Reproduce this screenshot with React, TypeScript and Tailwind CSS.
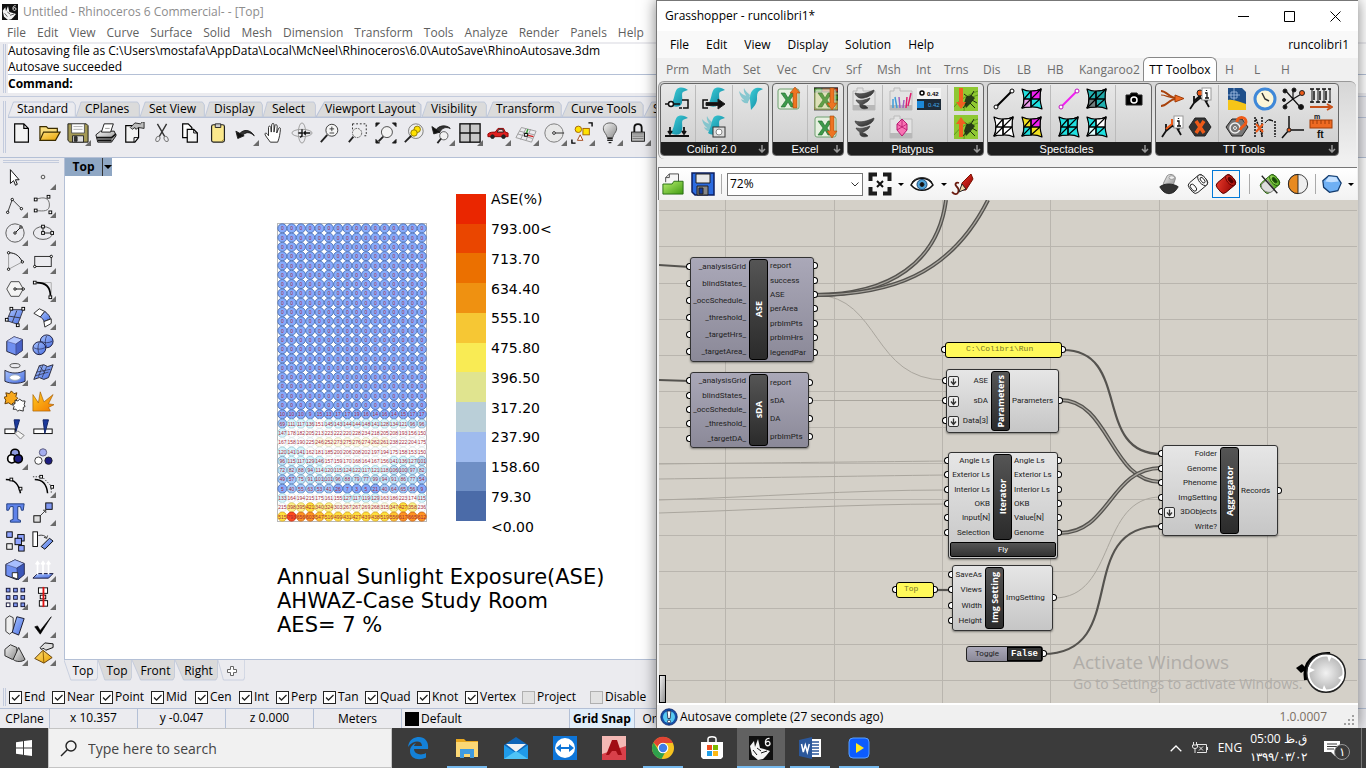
import { ReactNode } from "react";

const UI = "font-['Open_Sans','Noto_Sans',sans-serif]";

function Ico({ children, className = "w-6 h-6" }: { children?: ReactNode; className?: string }) {
  return (
    <svg viewBox="0 0 24 24" className={className + " shrink-0"} fill="none" stroke="#222" strokeWidth="1" aria-hidden="true">
      {children}
    </svg>
  );
}

// shared gradients for the toolbar drawings
function Defs() {
  const grads: [string, string, string][] = [
    ["gBlue", "#a9c4ff", "#4a6fe0"],
    ["gYel", "#ffe07a", "#e8a200"],
    ["gGray", "#f4f4f4", "#8c8c8c"],
    ["gRed", "#e8392a", "#8f0000"],
    ["gGreen", "#b8f070", "#3f9a10"],
    ["gTeal", "#3fd0d8", "#0b7f9c"],
    ["gDark", "#777777", "#222222"],
    ["gFire", "#ffcc20", "#f27800"],
  ];
  return (
    <svg width="0" height="0" className="absolute" aria-hidden="true">
      <defs>
        {grads.map(([id, a, b]) => (
          <linearGradient key={id} id={id} x1="0" y1="0" x2="1" y2="1">
            <stop offset="0" stopColor={a} />
            <stop offset="1" stopColor={b} />
          </linearGradient>
        ))}
        <radialGradient id="gKnob">
          <stop offset="0" stopColor="#f2f2f2" />
          <stop offset="1" stopColor="#b4b4b4" />
        </radialGradient>
      </defs>
    </svg>
  );
}

const RhinoMark = () => (
  <>
    <rect width="24" height="24" fill="#111" stroke="none" />
    <path d="M1 10l4-5 1 6 3-8 2 9 4 1 6 2-4 5-3 3-5 1-6-5z" fill="#f4f4f4" stroke="none" />
    <path d="M8 12l4 3M4 14l4 5M12 17l6-2" stroke="#111" />
    <path d="M20.500 2.500c-3-.5-4.500 2-4 5 .5 3.500 4.500 2.500 4.500 0s-3-3-4.200-.8" stroke="#f4f4f4" strokeWidth="1.300" />
  </>
);

const node = (x: number, y: number) => <rect x={x - 1.5} y={y - 1.5} width="3" height="3" fill="#fff" stroke="#000" />;
const dot = (x: number, y: number) => <circle cx={x} cy={y} r="1.300" fill="#fff" stroke="#000" />;

const stdIcons: [string, boolean, ReactNode][] = [
  ["New", false, <path d="M4 2h10l5 5v15H4zM14 2v5h5" fill="#f3f3f3" stroke="#000" strokeWidth="1.300" />],
  ["Open", false, <><path d="M1 19V5h7l2 2h10v4" fill="#f7dc7c" stroke="#3b2c00" strokeWidth="1.300" /><path d="M1 20l4-9h18l-5 9z" fill="url(#gYel)" stroke="#3b2c00" strokeWidth="1.300" /></>],
  ["Save", true, <><path d="M1 2h20l2 2v18H3l-2-2z" fill="#a59a55" stroke="#111" /><path d="M5 2h14v10H5z" fill="#fff" stroke="#555" /><path d="M7 5h10M7 8h10" stroke="#aaa" /><path d="M6 15h12v7H6z" fill="#ddd" /><path d="M8 16h3v5H8z" fill="#333" /></>],
  ["Print", false, <><path d="M1 14l5-4h15l2 5-5 7H3z" fill="url(#gGray)" stroke="#111" /><path d="M7 11l3-9h10l-3 9z" fill="#fff" stroke="#111" /><path d="M2 17h16l5-4M3 20h15" stroke="#111" strokeWidth="1.800" /><path d="M11 7h5" stroke="#999" /></>],
  ["Properties", false, <><path d="M3 4h14v13l-4 5H3z" fill="#f3f3f3" stroke="#000" strokeWidth="1.300" /><path d="M12 22v-5h5" stroke="#000" /><path d="M8 6l5-5 6 1 2-2h2v7l-6-1-3 2-1-2-3 2z" fill="#bbb" stroke="#222" /></>],
  ["Cut", false, <><path d="M7 2l8 14M17 2L9 16" stroke="#333" strokeWidth="1.500" /><ellipse cx="7.500" cy="18.500" rx="2" ry="3" transform="rotate(30 7.500 18.500)" stroke="#777" /><ellipse cx="16.500" cy="18.500" rx="2" ry="3" transform="rotate(-30 16.500 18.500)" stroke="#777" /></>],
  ["Copy", false, <><path d="M4 2h6l4 4v11H4z" fill="#fff" stroke="#000" strokeWidth="1.300" /><path d="M9 8h7l4 4v10H9z" fill="#f4f4f4" stroke="#000" strokeWidth="1.300" /><path d="M16 8v4h4" stroke="#000" /></>],
  ["Paste", false, <><rect x="5" y="3" width="14" height="19" rx="2" fill="#fbe88c" stroke="#222" strokeWidth="1.300" /><path d="M9 6V2h6v4z" fill="#ccc" stroke="#222" /><path d="M16 21l2-2" stroke="#a58a20" /></>],
  ["Undo", true, <><path d="M4 14c4-6 12-7 17 1-5-5-10-4-13 0z" fill="#333" stroke="#111" /><path d="M1 10l2 8 7-3z" fill="#111" /></>],
  ["Pan", false, <path d="M8 22c-2-3-5-6-6-9 1-2 3 0 4 2V6c0-2 2-2 2.500 0L9 11l.5-8c.5-2 2.500-2 2.500 0v8l1-7c.5-2 2.500-1 2.500.5L15 12l2-5c1-1.500 2.500-.5 2 1-.5 5-1 9-3 14z" fill="#fff" stroke="#222" />],
  ["Rotate view", false, <><ellipse cx="12" cy="12" rx="11" ry="4" stroke="#999" /><ellipse cx="12" cy="12" rx="4" ry="11" stroke="#999" /><path d="M12 8v8M8 12h5M15 12h6M12 15l-2 2M16 10l-2 2 2 2" stroke="#111" strokeWidth="1.500" /></>],
  ["Zoom dynamic", false, <><circle cx="14" cy="9" r="6.500" fill="#f6f6f6" stroke="#333" /><path d="M9 14l-7 8" strokeWidth="2" /><path d="M14 5v5M11.500 7.500h5M11.500 12h5" stroke="#333" /></>],
  ["Zoom window", false, <><path d="M6 2h15v13h-4M6 2v6" stroke="#222" strokeDasharray="2 2" /><circle cx="11" cy="12" r="5" fill="#eee" stroke="#555" strokeDasharray="2 1" /><path d="M7 16l-5 6" strokeWidth="2" /></>],
  ["Zoom extents", false, <><circle cx="13" cy="11" r="6" fill="#f3f3f3" stroke="#444" /><path d="M9 16l-5 5" strokeWidth="2" /><path d="M1 5V1h4zM23 5V1h-4zM1 19v4h4zM23 19v4h-4z" fill="#111" /></>],
  ["Zoom selected", false, <><circle cx="14" cy="10" r="8" fill="#eee" stroke="#777" /><path d="M9 15l-7 7" strokeWidth="2" /><circle cx="15.500" cy="8" r="3.500" fill="#ffe200" stroke="#8d7600" /><circle cx="12" cy="12" r="3.500" fill="#ffe200" stroke="#8d7600" /></>],
  ["Undo view", true, <><path d="M5 9c4-6 12-6 16-2-5-2-9-1-12 5z" fill="#333" /><path d="M1 5l2 8 7-2z" fill="#111" /><circle cx="14" cy="15" r="4.500" fill="#f1f1f1" stroke="#555" /><path d="M11 18l-4 5" strokeWidth="2" /></>],
  ["Four viewports", true, <><rect x="1" y="2" width="22" height="20" fill="#c8c8c8" stroke="#111" strokeWidth="1.500" /><path d="M12 2v20M1 12h22" stroke="#111" strokeWidth="1.500" /></>],
  ["Render", true, <><path d="M1 13c2-2 5-2 8-2l3-4h6l2 4 3 1v4H1z" fill="#e02020" stroke="#8f0000" /><path d="M11 11l2-3h4l1 3z" fill="#f5caca" /><circle cx="6" cy="16" r="2" fill="#222" /><circle cx="18" cy="16" r="2" fill="#222" /></>],
  ["Set CPlane", true, <><path d="M7 6l16 4-5 12L1 17zM5 10l16 4M3 13l16 5M12 7L6 19M17 8l-5 12" stroke="#999" /><path d="M12 14l8 2" stroke="#d02020" strokeWidth="1.500" /><path d="M12 14l2-6" stroke="#30a030" strokeWidth="1.500" /><rect x="10.500" y="12.500" width="3" height="3" fill="#fff" stroke="#000" /></>],
  ["Circle", true, <><circle cx="12" cy="12" r="10" fill="#e8e8e8" stroke="#777" /><path d="M12 12h11" stroke="#222" /><circle cx="12" cy="12" r="1.500" fill="#fff" stroke="#222" /></>],
  ["Object snap", true, <><circle cx="8" cy="8" r="3.500" fill="#ffe200" stroke="#a06000" /><rect x="13" y="7" width="7" height="7" fill="#ffe200" stroke="#a06000" /><path d="M10 14l3 6H7z" fill="#fff" stroke="#a04010" /><path d="M19 1h4v4M1 19v4h4" stroke="#000" strokeWidth="1.500" /></>],
  ["Lights", true, <><path d="M12 1c-6 0-8 4-7 8 1 3 3 4 4 8h6c1-4 3-5 4-8 1-4-1-8-7-8z" fill="url(#gGray)" stroke="#555" /><path d="M9 18h6M9 20h6M10.500 22.500h3" stroke="#222" strokeWidth="1.500" /></>],
  ["Lock", true, <><path d="M8 11V6c0-5 8-5 8 0v5" stroke="#111" strokeWidth="2" /><rect x="5" y="11" width="14" height="10" fill="#bbb" stroke="#111" /><path d="M6 13h12M6 15.500h12M6 18h12" stroke="#777" /></>],
];

const sideIcons: [string, boolean, ReactNode][] = [
  ["Select", false, <path d="M7 4v15l3.500-3 2 5 2-1-2-5h4z" fill="#fff" stroke="#000" />],
  ["Point", true, <circle cx="12" cy="12" r="2" fill="#eee" stroke="#444" />],
  ["Polyline", true, <><path d="M4 20L9 6l10 10" stroke="#333" />{dot(4, 20)}{dot(9, 6)}{dot(19, 16)}</>],
  ["Curve", true, <><path d="M4 6c10-4 15-1 15 6s-6 7-15 6" stroke="#666" />{node(4, 6)}{node(18, 3)}{node(4, 18)}{node(20, 20)}</>],
  ["Circle", true, <><circle cx="12" cy="12" r="10" stroke="#555" /><path d="M12 12l6-6" stroke="#000" />{dot(12, 12)}{dot(18.500, 5.500)}</>],
  ["Ellipse", true, <><ellipse cx="12" cy="12" rx="10.500" ry="7" stroke="#555" /><path d="M12 6v6h9" stroke="#222" />{node(12, 5)}{node(12, 12)}{node(22, 12)}</>],
  ["Arc", true, <><path d="M5 4v17l15-8" stroke="#999" /><path d="M5 3c8 0 12 4 15 10" stroke="#000" />{dot(5, 3)}{dot(5, 21)}{dot(20, 13)}</>],
  ["Rectangle", true, <><rect x="3" y="7" width="18" height="11" stroke="#222" />{dot(21, 7)}{dot(3, 18)}</>],
  ["Polygon", true, <><path d="M7.500 4h9L21 12l-4.500 8h-9L3 12z" fill="#f4f4f4" stroke="#444" /><path d="M12 12h9" stroke="#000" />{dot(12, 12)}{dot(21, 12)}</>],
  ["Fillet", true, <><path d="M4 5h17v15" stroke="#aaa" /><path d="M5 5c10 0 15 4 15 14" stroke="#000" strokeWidth="1.800" />{node(3, 5)}{node(20, 21)}</>],
  ["Surface", true, <><path d="M8 4h13l-6 16L3 16z" fill="url(#gBlue)" stroke="#334" /><path d="M14 5L9 18M5 11l13 2" stroke="#334" />{node(8, 3)}{node(21, 3)}{node(3, 15)}{node(15, 21)}</>],
  ["Loft", true, <><path d="M2 8l6-5 6 3-5 6z" fill="#fff" /><path d="M9 12l5-6c4 3 6 6 6 8l-7 3c0-2-2-4-4-5z" fill="url(#gBlue)" stroke="#223" /><path d="M13 17l8-3v5l-7 4z" fill="#fff" /></>],
  ["Box", true, <><path d="M3 8l8-5 9 3v12l-7 5-10-4z" fill="#6f8ff0" stroke="#223" /><path d="M3 8l10 3 7-5-9-3z" fill="#b4c8ff" stroke="#447" strokeWidth=".5" /><path d="M13 11l7-5v12l-7 5z" fill="#4a63c8" stroke="#335" strokeWidth=".5" /></>],
  ["Sphere", true, <><circle cx="16" cy="8" r="7" fill="url(#gBlue)" stroke="#113" /><circle cx="8" cy="15.500" r="7" fill="url(#gBlue)" stroke="#113" /><path d="M2 15c4 2 8 2 12 0M8 9c-2 4-2 9 0 13M10 8c4 2 8 2 12 0M16 2c-2 4-2 9 0 12" stroke="#224" strokeWidth=".7" /></>],
  ["Boolean", true, <><ellipse cx="12" cy="4" rx="5.500" ry="2.300" stroke="#444" /><path d="M1 9c6 4 16 4 22 0v12c-6 3-16 3-22 0z" fill="url(#gBlue)" stroke="#223" /><ellipse cx="12" cy="17" rx="6" ry="3" fill="#fff" stroke="#9ab" /></>],
  ["Mesh", true, <><path d="M8 4l5-1 4 2 6-2-5 14-5 2-5-2-6 2z" fill="url(#gBlue)" stroke="#223" /><path d="M5 11l15-3M8 4l6 8M12 3L7 16M16 5l-5 12M4 15l14-4" stroke="#223" strokeWidth=".7" /></>],
  ["Puzzle", false, <><path d="M2 3l4 1 2-3 3 3 3-1-1 4 2 2-2 2 1 4-4-1-2 2-3-2-4 1 1-4-2-3 3-1z" fill="#f7a81c" stroke="#5b3500" /><path d="M12 11l3 1 2-2 3 2 3 0-1 4 1 2-2 1 0 4-4-1-2 1-2-2-3 0 1-3-2-2 3-1z" fill="#fff" /></>],
  ["Explode", false, <path d="M1 23L1 5l6 9 2-12 4 11 10-8-5 10 6 1-6 3 2 4z" fill="url(#gFire)" stroke="#a35c00" strokeWidth=".7" />],
  ["Trim", false, <><path d="M11 2h6l-4 13z" fill="#1c3a9c" stroke="#0c1f60" /><rect x="1" y="12" width="11" height="5" fill="#fff" stroke="#000" /><path d="M12 17l3-3 7 5-4 4z" fill="#f4f4f4" stroke="#777" /></>],
  ["Split", false, <><rect x="2" y="12" width="20" height="5" fill="#fff" stroke="#000" /><path d="M12 2h6l-4 15z" fill="#1c3a9c" stroke="#0c1f60" /></>],
  ["Group", true, <g strokeWidth="1.800" stroke="#000"><circle cx="12" cy="8" r="4.500" fill="#8f9ce0" /><circle cx="8.500" cy="14" r="4.500" fill="#fff" /><circle cx="15.500" cy="14" r="4.500" fill="#1d1d80" /></g>],
  ["Ungroup", false, <><circle cx="12" cy="7" r="4" fill="#a5aef0" stroke="#557" /><circle cx="7" cy="16" r="4" fill="#fff" stroke="#333" /><circle cx="18" cy="16" r="4" fill="#1d1d80" /></>],
  ["Edit points", false, <><path d="M2 6c10 0 14 5 16 15" stroke="#000" strokeWidth="1.600" />{node(8, 6)}{node(18, 16)}</>],
  ["Control points", true, <><path d="M3 6c9 0 13 5 14 15" stroke="#000" strokeWidth="1.600" /><path d="M1 3h10l10 10v8" stroke="#333" strokeDasharray="1.500 1.500" />{node(10, 3)}{node(22, 14)}</>],
  ["Text", false, <path d="M3 2h19l-1 7h-2l-1-4h-3v14l3 1v2H7v-2l3-1V5H7L5 9H3z" fill="#5f83ea" stroke="#1c3a7c" />],
  ["Move", true, <><path d="M9 15l6-6M15 9h-3M15 9v3" stroke="#333" /><rect x="15" y="1" width="7" height="7" fill="#7f97f0" stroke="#000" /><rect x="2" y="15" width="7" height="7" fill="#ddd" stroke="#000" /></>],
  ["Array", false, <><g fill="#8fa4ff" stroke="#000"><rect x="3" y="2" width="6" height="6" /><rect x="15" y="5" width="7" height="7" /><rect x="12" y="9" width="7" height="7" /><rect x="16" y="17" width="6" height="6" /></g><rect x="3" y="15" width="6" height="6" fill="#eee" stroke="#000" /></>],
  ["Orient", false, <><rect x="1" y="2" width="5" height="16" fill="#fff" stroke="#000" /><path d="M10 18l9-9 4 3-9 9z" fill="url(#gBlue)" stroke="#000" /><path d="M7 6c4-1 8 0 9 3M16 9l-3-1M16 9l1-3" stroke="#333" /></>],
  ["Solid edit", true, <><path d="M2 7l10-5 10 4v12l-7 6-13-5z" fill="#6f8ff0" stroke="#112" /><path d="M2 7l12 4 8-5-10-4z" fill="#a8beff" stroke="#335" strokeWidth=".5" /><path d="M14 11l8-5v12l-7 6z" fill="#3b56b8" stroke="#224" strokeWidth=".5" /><path d="M9 16h6v7l-6-2z" fill="#fff" /></>],
  ["Extrude", true, <><path d="M1 22l5-5h17l-5 5z" fill="url(#gBlue)" stroke="#113" /><path d="M6 18V5M12 18V5M18 18V5M4 7l2-3 2 3M10 7l2-3 2 3M16 7l2-3 2 3" stroke="#fff" strokeWidth="1.800" /></>],
  ["Rectangular array", true, <g fill="#7f97f0" stroke="#113"><rect x="2.500" y="2.500" width="4" height="4" /><rect x="10.500" y="2.500" width="4" height="4" /><rect x="18.500" y="2.500" width="4" height="4" /><rect x="2.500" y="10.500" width="4" height="4" /><rect x="10.500" y="10.500" width="4" height="4" /><rect x="18.500" y="10.500" width="4" height="4" /><rect x="2.500" y="18.500" width="4" height="4" fill="#fff" /><rect x="10.500" y="18.500" width="4" height="4" /><rect x="18.500" y="18.500" width="4" height="4" /></g>],
  ["Align", true, <><g fill="#fff" stroke="#000"><rect x="7" y="2" width="10" height="6" /><rect x="9" y="10" width="6" height="4" /><rect x="8" y="16" width="9" height="6" /></g><path d="M12.500 1v22" stroke="#e01010" strokeWidth="2" /></>],
  ["Shear", true, <><path d="M2 5l4-3 4 2v15l-4 3-4-3z" fill="#eee" stroke="#333" /><path d="M14 3l8 2-6 18-7-3z" fill="url(#gBlue)" stroke="#112" /></>],
  ["Check", true, <path d="M3 14l3-1 3 5L21 3 9 22z" fill="#000" stroke="#000" strokeWidth=".7" />],
  ["Primitives", true, <><path d="M1 8l6-5 7 3v10l-5 3-8-4z" fill="url(#gGray)" stroke="#222" /><path d="M16 6l7 13c-3 3-10 3-13 0z" fill="url(#gGray)" stroke="#222" /></>],
  ["Pyramid", true, <><path d="M12 9l10 8-9 6-10-5z" fill="url(#gYel)" stroke="#5b3500" /><path d="M12 9l1 14" stroke="#8b5a00" /><path d="M9 6l5-5 9 1v4l-8 3-2-2-3 1z" fill="#ddd" stroke="#000" /></>],
];

const menus = ["File", "Edit", "View", "Curve", "Surface", "Solid", "Mesh", "Dimension", "Transform", "Tools", "Analyze", "Render", "Panels", "Help"];
const toolTabs: [string, string][] = [
  ["Standard", "w-[68px]"], ["CPlanes", "w-[64px]"], ["Set View", "w-[65px]"], ["Display", "w-[58px]"], ["Select", "w-[53px]"],
  ["Viewport Layout", "w-[106px]"], ["Visibility", "w-[65px]"], ["Transform", "w-[75px]"], ["Curve Tools", "w-[82px]"], ["Surface Tools", "w-[96px]"],
];
const snaps: [string, boolean, string][] = [
  ["End", true, "w-[43px]"], ["Near", true, "w-[48px]"], ["Point", true, "w-[51px]"], ["Mid", true, "w-[44px]"], ["Cen", true, "w-[44px]"],
  ["Int", true, "w-[37px]"], ["Perp", true, "w-[47px]"], ["Tan", true, "w-[42px]"], ["Quad", true, "w-[52px]"], ["Knot", true, "w-[48px]"],
  ["Vertex", true, "w-[57px]"], ["Project", false, "w-[68px]"], ["Disable", false, "w-[68px]"],
];

// lower rows of the analysis grid, everything above them is 0 hours
const rows = [
  [10, 10, 10, 9, 15, 13, 17, 17, 19, 16, 14, 16, 14, 15, 17, 17],
  [69, 111, 117, 136, 151, 145, 143, 144, 144, 148, 141, 128, 134, 121, 96, 96],
  [147, 178, 182, 205, 213, 223, 222, 220, 228, 234, 218, 205, 208, 193, 156, 150],
  [167, 158, 190, 225, 246, 252, 273, 275, 276, 274, 262, 261, 238, 222, 204, 175],
  [120, 141, 141, 162, 181, 185, 200, 206, 208, 202, 197, 194, 175, 158, 153, 150],
  [96, 115, 117, 129, 146, 157, 159, 170, 168, 164, 167, 156, 141, 136, 127, 101],
  [72, 82, 88, 94, 114, 120, 115, 124, 122, 117, 121, 118, 106, 100, 97, 82],
  [49, 57, 75, 91, 101, 101, 96, 88, 79, 77, 99, 94, 91, 86, 77, 54],
  [5, 40, 55, 63, 53, 41, 26, 7, 3, 5, 21, 40, 64, 65, 56, 9],
  [133, 164, 194, 215, 175, 161, 155, 127, 117, 119, 129, 163, 186, 223, 174, 115],
  [215, 398, 395, 421, 340, 324, 303, 267, 267, 269, 268, 315, 347, 427, 358, 236],
  [515, 793, 656, 603, 547, 516, 499, 431, 427, 439, 438, 519, 556, 617, 665, 612],
];
const grid = [...Array.from({ length: 20 }, () => Array(16).fill(0) as number[]), ...rows];

function shade(v: number): [string, string] {
  if (v < 30) return ["#86abfb", "#4d72b6"];
  if (v < 70) return ["#a4c8fa", "#5f8ac2"];
  if (v < 110) return ["#bfe4fa", "#7fa6c4"];
  if (v < 150) return ["#d8f5fd", "#9fd0dc"];
  if (v < 240) return ["#fdfefe", "#dfe8ea"];
  if (v < 320) return ["#fdfbe6", "#e2e0bc"];
  if (v < 400) return ["#fdf38a", "#dcc95c"];
  if (v < 530) return ["#ffe23c", "#dfae28"];
  if (v < 600) return ["#ffc42c", "#d8902a"];
  if (v < 700) return ["#ff9420", "#cf6a1a"];
  return ["#ff4a1c", "#cc2a10"];
}

function HeatMap() {
  const p = 9.3;
  return (
    <svg viewBox="0 0 150 299" className="w-[150px] h-[299px] shrink-0" role="img" aria-label="ASE grid">
      <rect x=".5" y=".5" width="149" height="298" fill="#fff" stroke="#b9b9b9" />
      {grid.map((r, j) =>
        r.map((v, i) => {
          const [fill, ring] = shade(v);
          const x = 5.3 + i * p;
          const y = 5.3 + j * p;
          return (
            <g key={j + "-" + i}>
              <circle cx={x} cy={y} r="4.500" fill={fill} stroke={ring} strokeWidth=".9" />
              <text x={x} y={y + 2} textAnchor="middle" fontSize="5" fill="#a52a3c" fontFamily="Liberation Sans, sans-serif">{v}</text>
            </g>
          );
        })
      )}
    </svg>
  );
}

const legendBars = ["bg-[#ea2600]", "bg-[#ea4600]", "bg-[#eb7000]", "bg-[#ef9111]", "bg-[#f6c734]", "bg-[#f9eb54]", "bg-[#e0e48f]", "bg-[#bacfd8]", "bg-[#9fbbee]", "bg-[#6f8fc5]", "bg-[#4b6ba8]"];
const legendText = ["ASE(%)", "793.00<", "713.70", "634.40", "555.10", "475.80", "396.50", "317.20", "237.90", "158.60", "79.30", "<0.00"];

function ToolBtn({ name, flyout, children }: { name: string; flyout: boolean; children: ReactNode }) {
  return (
    <button aria-label={name} className="relative w-7 h-7 flex items-center justify-center">
      <Ico className="w-[22px] h-[22px]">{children}</Ico>
      {flyout && (
        <svg viewBox="0 0 6 6" className="absolute right-px bottom-px w-[6px] h-[6px]" aria-hidden="true">
          <path d="M6 0v6H0z" fill="#6b6b6b" />
        </svg>
      )}
    </button>
  );
}

function TopTab({ label, width, active }: { label: string; width: string; active?: boolean }) {
  return (
    <button className={"relative h-4 text-left pl-[9px] whitespace-nowrap shrink-0 " + width}>
      <svg viewBox="0 0 100 16" preserveAspectRatio="none" className="absolute inset-0 w-full h-full" aria-hidden="true">
        <path d="M0 16L8 1h88l3 3v12z" fill={active ? "#ebebef" : "#dbdbdb"} stroke="#b9c3d8" />
      </svg>
      <span className="relative leading-4 block">{label}</span>
    </button>
  );
}

function Rhino() {
  return (
    <section aria-label="Rhinoceros" className={"absolute inset-0 flex flex-col overflow-hidden bg-[#ebebef] text-[12px] text-black " + UI}>
      <div className="h-6 shrink-0 bg-white flex items-center gap-[5px] pl-[2px] text-[#8d8d8d]">
        <Ico className="w-4 h-4"><RhinoMark /></Ico>
        <span className="whitespace-nowrap">Untitled - Rhinoceros 6 Commercial- - [Top]</span>
      </div>
      <nav className="h-[18px] shrink-0 bg-white flex items-center gap-[11px] pl-[7px] text-[#5f5f5f]">
        {menus.map((m) => <button key={m}>{m}</button>)}
      </nav>
      <div className="shrink-0 pt-[2px] pl-[3px] flex gap-[2px]">
        <span className="w-[3px] border-x border-[#c3cbdd]" />
        <div className="flex-1 h-[49px] bg-white whitespace-nowrap flex flex-col">
          <p className="h-[14px] leading-[14px] overflow-visible">Autosaving file as C:\Users\mostafa\AppData\Local\McNeel\Rhinoceros\6.0\AutoSave\RhinoAutosave.3dm</p>
          <p className="h-[16px] leading-[18px]">Autosave succeeded</p>
          <label className="flex-1 border-t border-[#b4c0d6] font-bold flex items-center gap-1">
            Command:
            <input className="flex-1 min-w-0 outline-none font-normal" />
          </label>
        </div>
      </div>
      <div className="shrink-0 mt-[3px] border-t border-[#c3cbdd] pt-1 pl-[3px] flex gap-[2px] h-[62px] border-b border-b-[#b4c0d6]">
        <span className="w-[3px] h-[52px] border-x border-[#c3cbdd]" />
        <div className="flex-1 min-w-0">
          <div className="flex border-b border-[#b9c3d8] h-[17px]">
            {toolTabs.map(([t, w], i) => <TopTab key={t} label={t} width={w} active={i === 0} />)}
          </div>
          <div className="flex pt-px overflow-hidden">
            {stdIcons.map(([n, f, d]) => <ToolBtn key={n} name={n} flyout={f}>{d}</ToolBtn>)}
          </div>
        </div>
      </div>
      <div className="flex-1 min-h-0 flex">
        <aside className="w-16 shrink-0 pl-px pt-[2px]">
          <div className="h-[3px] w-14 border-y border-[#c3cbdd] ml-[2px]" />
          <div className="grid grid-cols-[28px_28px]">
            {sideIcons.map(([n, f, d]) => <ToolBtn key={n} name={n} flyout={f}>{d}</ToolBtn>)}
          </div>
        </aside>
        <div className="flex-1 min-w-0 flex flex-col">
          <div className="flex-1 min-h-0 bg-white border-l border-b border-[#b4c0d6] overflow-hidden">
            <div className="flex">
              <button className="h-[18px] w-[38px] bg-[#8fa7c4] font-bold leading-[18px] border-r border-[#333]">Top</button>
              <button aria-label="Viewport menu" className="h-[18px] w-[9px] bg-[#8fa7c4] flex items-center justify-center">
                <svg viewBox="0 0 8 4" className="w-2 h-1"><path d="M0 0h8L4 4z" fill="#000" /></svg>
              </button>
            </div>
            <div className="ml-[212px] mt-2 flex font-['DejaVu_Sans',sans-serif]">
              <div className="pt-[39px]"><HeatMap /></div>
              <div className="ml-[29px] mt-[10px] w-[30px] h-[327px] flex flex-col">
                {legendBars.map((c) => <div key={c} className={"flex-1 " + c} />)}
              </div>
              <ul className="ml-[5px] mt-px h-[357px] flex flex-col text-[14px]">
                {legendText.map((t) => <li key={t} className="flex-1 flex items-center">{t}</li>)}
              </ul>
            </div>
            <div className="ml-[212px] mt-[23px] text-[21px] leading-6 font-['DejaVu_Sans',sans-serif] whitespace-nowrap">
              <p>Annual Sunlight Exposure(ASE)</p>
              <p>AHWAZ-Case Study Room</p>
              <p>AES= 7 %</p>
            </div>
          </div>
          <div className="h-[26px] shrink-0 flex">
            {["Top", "Top", "Front", "Right", "+"].map((t, i) => (
              <button key={i} className={"relative h-[21px] " + ["w-[34px]", "w-[34px]", "w-[43px]", "w-[43px]", "w-[27px]"][i]}>
                <svg viewBox="0 0 100 21" preserveAspectRatio="none" className="absolute inset-0 w-full h-full" aria-hidden="true">
                  <path d="M0 0L20 20H95L99 17V0" fill={i > 0 && i < 4 ? "#dadada" : "#ebebef"} stroke="#b9c3d8" />
                </svg>
                {t === "+" ? (
                  <svg viewBox="0 0 10 10" className="relative w-[10px] h-[10px] ml-[9px]" fill="#fff" stroke="#666"><path d="M3.500.5h3v3h3v3h-3v3h-3v-3h-3v-3h3z" /></svg>
                ) : (
                  <span className="relative pl-1">{t}</span>
                )}
              </button>
            ))}
          </div>
        </div>
      </div>
      <div className="h-[22px] shrink-0 flex items-center pl-[3px]">
        <span className="w-[3px] h-[18px] border-x border-[#c3cbdd] mr-[3px]" />
        {snaps.map(([s, on, w]) => (
          <label key={s} className={"shrink-0 flex items-center gap-[2px] whitespace-nowrap " + w}>
            <span className="relative w-[13px] h-[13px] shrink-0">
              <input type="checkbox" defaultChecked={on} className={"peer appearance-none block w-[13px] h-[13px] border " + (on ? "border-[#222] bg-white" : "border-[#b0b0b0] bg-[#e2e2e2]")} />
              <svg viewBox="0 0 13 13" className="absolute inset-0 hidden peer-checked:block pointer-events-none"><path d="M3 6.500l2.500 2.500L10.500 4" fill="none" stroke="#222" strokeWidth="1.300" /></svg>
            </span>
            {s}
          </label>
        ))}
      </div>
      <div className="h-5 shrink-0 flex border-t border-[#b4c0d6] text-center leading-[18px] whitespace-nowrap">
        <button className="w-[50px] border-r border-[#b4c0d6]">CPlane</button>
        <span className="w-[88px] border-r border-[#b4c0d6]">x 10.357</span>
        <span className="w-[88px] border-r border-[#b4c0d6]">y -0.047</span>
        <span className="w-[88px] border-r border-[#b4c0d6]">z 0.000</span>
        <button className="w-[88px] border-r border-[#b4c0d6]">Meters</button>
        <button className="w-[168px] border-r border-[#b4c0d6] flex items-center gap-[2px] pl-[3px]"><span className="w-[14px] h-[14px] bg-black" />Default</button>
        <button className="w-[65px] border-r border-[#b4c0d6] font-bold bg-[#e1eefa]">Grid Snap</button>
        <button className="w-[48px]">Ortho</button>
      </div>
    </section>
  );
}

const bird = <path d="M23 3C20 1 16-1 12 2c-3 4-2 9-6 16 4 3 11 2 11-3 1-4-1-8 1-10 1-1 3-1 5-2z" fill="url(#gTeal)" stroke="none" />;
const wing = <path d="M12 10C8 9 3 8 0 4c1 6 4 9 9 11M11 8C9 6 6 4 5 1c-1 4 2 8 5 10M9 13c-3 1-5 0-7-1 1 3 4 5 7 4" fill="#7cc3cc" stroke="none" fillOpacity=".9" />;
const swallow = <>{wing}<path d="M24 2c-3-1-6-2-9 0-4 3-4 7-4 11l1 10c3-3 6-7 6-11 0-4 0-6 2-8 1-1 3-1 4-2z" fill="url(#gTeal)" stroke="none" /></>;
const sheet = <><rect x="1" y="2" width="21" height="20" rx="2" fill="#e6f1e0" stroke="#6fa070" /><path d="M4 6h4l3 5 3-5h4l-5 7 5 7h-4l-3-5-3 5H4l5-7z" fill="#3d9a4a" stroke="#1c6a2a" strokeWidth=".6" /></>;
const arrowUp = <path d="M18 0l5 6h-3v15h-4V6h-3z" fill="#ee7422" stroke="#a34a0c" strokeWidth=".6" />;
const arrowDown = <path d="M18 23l5-7h-3V1h-4v15h-3z" fill="#ee7422" stroke="#a34a0c" strokeWidth=".6" />;
const folder = <><path d="M1 4h4V1h6v3h12v19H1z" fill="#e3e3e3" stroke="#bbb" /><path d="M1 18h22v5H1z" fill="#b8b8b8" stroke="none" /></>;
const bill = <><path d="M3 6c6 2 12 0 19-3 0 4-5 7-10 8-4 1-8-1-9-5z" fill="url(#gDark)" stroke="#333" strokeWidth=".6" /><path d="M4 13c5 1 9 0 14-2-1 4-6 5-8 7 3 0 4 1 6 3-4 2-9 0-8-3 0-2-3-2-4-5z" fill="url(#gDark)" stroke="#333" strokeWidth=".6" /></>;
const leaf = <><rect width="24" height="24" fill="#8fc832" stroke="none" /><path d="M0 20C6 12 14 8 24 4M10 24c0-8 6-14 14-16" stroke="#5c9a1c" /><path d="M12 10l5-2 4 3-5 6-4 4-2-5z" fill="#283c18" stroke="none" /><path d="M10 7l4 3M20 4l-3 5M23 16l-5-3M9 21l4-5M21 21l-5-5" stroke="#1c2c10" /></>;
const mesh = (a: string, b: string, c: string) => (
  <g stroke="#000" strokeWidth="1.200" strokeLinejoin="round">
    <path d="M2 2c5 3 14 3 19 0-2 6-1 13 1 20-6-3-15-2-20-1 3-6 2-13 0-19z" fill={a} />
    <path d="M11 4c4 0 7 0 10-2-1 4-1 7-1 10h-9z" fill={b} />
    <path d="M4 12h7v8c-3 0-6 0-9 1 2-4 2-6 2-9z" fill={c} />
    <path d="M11 4v16M4 12h16M4 12l7-8M11 12l10-10M2 21l9-9M11 20l9-8" />
  </g>
);
const branch = (c: string) => <><path d="M2 22l4-6V9M6 16l6-5 8 3M12 11V5M17 13l4 7" stroke="#111" strokeWidth="1.800" /><path d="M6 14l6-5V4" stroke={c} strokeWidth="2" /></>;
const tag = <><rect x="14" y="1" width="9" height="12" fill="#fff" stroke="#999" /><path d="M17 6h2v5M17 11h4M18.500 3v1" stroke="#111" strokeWidth="1.300" /></>;

// a group is a list of clusters, a cluster a list of two-icon columns
type Col = [string, ReactNode, string?, ReactNode?];
const groups: [string, Col[][]][] = [
  ["Colibri 2.0", [
    [["Iterator", <>{bird}<path d="M0 17h3M9 17h6M17 13h6v8h-5M17 21h-3" stroke="#111" strokeWidth="1.500" /><circle cx="6" cy="17" r="2.500" fill="#fff" stroke="#111" strokeWidth="1.500" /></>, "Aggregator", <>{bird}<path d="M0 21h24M5 12v6M19 12v6M3 16l2 3 2-3M17 16l2 3 2-3" stroke="#111" strokeWidth="1.800" /></>]],
    [["Parameters", <>{bird}<path d="M6 13H1v8h5" stroke="#111" strokeWidth="1.500" /><path d="M4 15.500h12V12l7 5-7 5v-3.500H4z" fill="#111" /></>, "Image setting", <>{wing}{bird}<rect x="11" y="12" width="12" height="10" fill="#ddd" stroke="#333" /><circle cx="17" cy="17" r="3" fill="#fff" stroke="#888" /></>]],
    [["Colibri", swallow]],
  ]],
  ["Excel", [
    [["Write", <>{sheet}{arrowUp}</>]],
    [["Read", <><path d="M0 1h24v22H0z" fill="#c8b040" stroke="#555" /><path d="M0 1h8v4H0zM16 8h8v5h-8z" fill="#3f9a10" /><path d="M8 1h16v4H8z" fill="#d83010" /><g opacity=".75">{sheet}</g>{arrowDown}</>, "Read file", <>{sheet}{arrowDown}</>]],
  ]],
  ["Platypus", [
    [["Session", <>{folder}{bill}</>, "Signal", bill]],
    [["Graph", <>{folder}<path d="M4 21V12M8 21L6 10" stroke="#3f9bd8" strokeWidth="1.500" /><path d="M11 21l-1-11M14 21l1-8" stroke="#a060c0" strokeWidth="1.500" /><path d="M17 21l1-11M19 19l3-13" stroke="#e02070" strokeWidth="1.500" /></>, "Gem", <>{folder}<path d="M13 4l5 5v6l-5 6-5-6V9z" fill="#f873b4" stroke="#b81870" /><path d="M8 9l5 3 5-3M8 15l5-3 5 3M13 4v8" stroke="#b81870" strokeWidth=".8" /></>],
      ["Slider", <><rect y="1" width="24" height="11" fill="#f4f4f4" stroke="none" /><circle cx="5" cy="6" r="2" stroke="#000" strokeWidth="1.500" /><text x="10" y="9" fontSize="6" fill="#000" stroke="none" fontFamily="Liberation Sans" fontWeight="700">0.42</text><rect y="12" width="24" height="11" fill="#1d2b38" stroke="none" /><rect y="14" width="7" height="7" fill="#1c88d8" stroke="none" /><text x="11" y="20" fontSize="6" fill="#3fa8e8" stroke="none" fontFamily="Liberation Sans">0.42</text></>]],
    [["Bug down", <>{leaf}<path d="M7 22l5-7H9V1H5v14H2z" fill="#f06020" stroke="none" /></>, "Bug up", <>{leaf}<path d="M7 2l5 7H9v13H5V9H2z" fill="#f06020" stroke="none" /></>]],
  ]],
  ["Spectacles", [
    [["Line", <><path d="M4 20L20 4" stroke="#000" strokeWidth="2" /><circle cx="4" cy="20" r="2" fill="#fff" stroke="#000" /><circle cx="20" cy="4" r="2" fill="#fff" stroke="#000" /></>, "Mesh", mesh("#fff", "#fff", "#fff")],
      ["Color mesh", mesh("#20e0e0", "#f020f0", "#f0a0f0"), "Color faces", mesh("#f0e020", "#f020f0", "#20e0e0")]],
    [["Line color", <><path d="M4 20L20 4" stroke="#f020f0" strokeWidth="2" /><circle cx="4" cy="20" r="2" fill="#fff" stroke="#c010c0" /><circle cx="20" cy="4" r="2" fill="#fff" stroke="#c010c0" /></>, "Cyan mesh", mesh("#20e0e0", "#20e0e0", "#20e0e0")],
      ["Gray mesh", mesh("#20b0b0", "#20a8a8", "#708080"), "Light mesh", mesh("#20e0e0", "#fff", "#e0ffff")]],
    [["Camera", <><path d="M4 8h4l1-2h6l1 2h4v10H4z" fill="#000" /><circle cx="12" cy="13" r="3" stroke="#fff" strokeWidth="1.500" /></>]],
  ]],
  ["TT Tools", [
    [["Merge", <><path d="M1 4c6 0 8 7 15 7M1 19c6 0 8-7 15-7" stroke="#a8420c" strokeWidth="2" /><path d="M1 8c5 0 8 3 15 3" stroke="#a8420c" strokeWidth="1.200" /><path d="M15 8l9 3.500-9 3.500z" fill="#ee6a22" stroke="#a03c08" /></>, "Branch info", <>{branch("#ee5a18")}{tag}</>],
      ["Tree info", <>{branch("#111")}<circle cx="12" cy="6" r="3" fill="#ee5a18" />{tag}</>, "Cull", <><path d="M7 3h10l6 9-6 9H7l-6-9z" fill="#333" /><path d="M8 6l8 12M16 6L8 18" stroke="#ee5a18" strokeWidth="3.500" /></>]],
    [["Layout", <><path d="M3 1h14l4 4v18H3z" fill="#1f4f8a" stroke="none" /><path d="M3 13c6-1 11 2 18 4v6H3z" fill="#f5c518" stroke="none" /><path d="M9 1v12M3 8h12M6 5h6v6H6z" stroke="#a9c4e8" strokeWidth=".8" /></>, "Question", <><path d="M7 4h10l6 8-6 9H7l-6-9z" fill="#777" stroke="#222" /><circle cx="10" cy="13" r="5" stroke="#eee" strokeWidth="1.500" /><circle cx="10" cy="13" r="1.500" stroke="#eee" /><path d="M12 7c0-6 9-6 9 0 0 4-5 4-6 8" stroke="#ee5a18" strokeWidth="3" /></>],
      ["Clock", <><circle cx="12" cy="12" r="10" fill="#fdf6d8" stroke="#3f88d8" strokeWidth="3" /><path d="M9 6l3 6 4 2" stroke="#333" strokeWidth="1.500" /></>, "Remap", <><path d="M2 2v20M9 2v20M3 4l6 16M22 6v16" stroke="#111" strokeDasharray="2 1" strokeWidth="1.500" /><path d="M3 9l7 8M10 9l-7 8" stroke="#ee5a18" strokeWidth="2" /><path d="M12 8c3-4 5-4 8-2M20 6l-4-1" stroke="#111" /></>],
      ["Network", <><path d="M12 12L4 3M12 12L22 6M12 12L3 19M12 12l8 9M12 12L12 3" stroke="#111" strokeWidth="1.200" /><g fill="#111"><circle cx="4" cy="4" r="2" /><circle cx="13" cy="3" r="2" /><circle cx="3" cy="13" r="1.500" /><circle cx="4" cy="20" r="2" /><circle cx="20" cy="20" r="2.500" /></g><circle cx="21" cy="6" r="2.500" fill="#ee5a18" /></>, "Axes", <><path d="M8 15V1M8 15h15M8 15l-7 8" stroke="#111" strokeWidth="1.500" /><circle cx="8" cy="15" r="2" fill="#ee5a18" /></>],
      ["Springs", <><g stroke="#111"><path d="M3 2v14M9 2v14M15 2v14M21 2v14" /><path d="M1 2h4M7 2h4M13 2h4M19 2h3M1 15h4M7 15h4M13 15h4M19 15h3M5 4v9M11 4v9M17 4v9" strokeWidth="1.500" /></g><path d="M1 20h20M18 17l5 3-5 3" stroke="#c85018" strokeWidth="1.800" /></>, "Units", <><rect x="1" y="5" width="22" height="8" fill="#ee6a22" stroke="#a03c08" /><path d="M4 5v4M8 5v4M12 5v4M16 5v4M20 5v4" stroke="#a03c08" /><text x="5" y="4" fontSize="7" fontWeight="700" fill="#111" stroke="none" fontFamily="Liberation Sans">m</text><text x="8" y="23" fontSize="10" fontWeight="700" fill="#111" stroke="none" fontFamily="Liberation Sans">ft</text></>]],
  ]],
];

const tabs: [string, string][] = [
  ["Prm", "w-[36px]"], ["Math", "w-[41px]"], ["Set", "w-[34px]"], ["Vec", "w-[35px]"], ["Crv", "w-[34px]"], ["Srf", "w-[31px]"], ["Msh", "w-[39px]"],
  ["Int", "w-[28px]"], ["Trns", "w-[39px]"], ["Dis", "w-[34px]"], ["LB", "w-[30px]"], ["HB", "w-[32px]"], ["Kangaroo2", "w-[69px]"],
  ["TT Toolbox", "w-[74px]"], ["H", "w-[29px]"], ["L", "w-[27px]"], ["H", "w-[28px]"],
];

function Port({ side }: { side: "l" | "r" }) {
  return side === "l" ? (
    <span className="absolute -left-[5px] top-1/2 -mt-[4px] w-1 h-[7px] rounded-l-full border border-r-0 border-black bg-white" />
  ) : (
    <span className="absolute -right-[5px] top-1/2 -mt-[4px] w-1 h-[7px] rounded-r-full border border-l-0 border-black bg-white" />
  );
}

type NodeProps = {
  name: string;
  pos: string;
  inW: string;
  inputs: string[];
  outputs: string[];
  arrows?: string[];
  tone?: string;
  footer?: string;
};

function Component({ name, pos, inW, inputs, outputs, arrows = [], tone = "from-[#e6e6e6] to-[#c6c6c6]", footer }: NodeProps) {
  return (
    <div className={"absolute rounded-[3px] border border-[#333] bg-linear-to-b flex flex-col text-[8px] leading-[10px] text-[#222] font-['Roboto',sans-serif] shadow-[0_1px_2px_rgba(0,0,0,0.4)] " + tone + " " + pos}>
      <div className="flex flex-1 min-h-0">
        <div className={"flex flex-col py-px shrink-0 " + inW}>
          {inputs.map((t) => (
            <div key={t} className="relative flex-1 flex items-center justify-end pr-[3px] whitespace-nowrap">
              <Port side="l" />
              {arrows.includes(t) && (
                <svg viewBox="0 0 11 11" className="absolute left-[1px] w-[11px] h-[11px]" fill="#eee" stroke="#333">
                  <rect x=".5" y=".5" width="10" height="10" rx="1.500" />
                  <path d="M5.500 2.500v6M3 5.500l2.500 3 2.500-3" fill="none" strokeWidth="1.300" />
                </svg>
              )}
              {t}
            </div>
          ))}
        </div>
        <div className="w-[19px] shrink-0 my-px rounded-[3px] border border-black bg-linear-to-b from-[#555] to-[#2b2b2b] flex items-center justify-center">
          <span className="[writing-mode:vertical-rl] rotate-180 font-bold text-white whitespace-nowrap text-[9px] font-['Open_Sans',sans-serif]">{name}</span>
        </div>
        <div className="flex flex-col flex-1 min-w-0 py-px">
          {outputs.map((t) => (
            <div key={t} className="relative flex-1 flex items-center pl-[2px] whitespace-nowrap">
              {t}
              <Port side="r" />
            </div>
          ))}
        </div>
      </div>
      {footer && <button className="h-[15px] m-px rounded-[2px] border border-black bg-linear-to-b from-[#555] to-[#333] text-white">{footer}</button>}
    </div>
  );
}

const gridX = [725, 834, 942, 1050, 1159, 1267];
const gridY = [210, 246, 283, 319, 355, 391, 427, 463, 499, 535, 571, 608, 644, 680];
const wire = (d: string) => <path d={d} stroke="#55534f" strokeWidth="2.200" />;
const thin = (d: string) => <path d={d} stroke="#aaa69e" strokeWidth="1" />;
const pair = (d: string) => (
  <>
    <path d={d} stroke="#55534f" strokeWidth="4" />
    <path d={d} stroke="#a8a59e" strokeWidth="1.300" />
  </>
);

function Canvas() {
  const purple = "from-[#aaa8b8] to-[#8b8998]";
  return (
    <div className="relative flex-1 min-h-0 bg-[#d4d0c8] overflow-hidden">
      <svg viewBox="659 200 698 504" className="absolute left-0 top-0 w-[698px] h-[504px]" fill="none" aria-hidden="true">
        {gridX.map((x) => <path key={x} d={`M${x + 0.5} 200V704`} stroke="#b9b5ae" />)}
        {gridY.map((y) => <path key={y} d={`M659 ${y + 0.5}H1357`} stroke="#b9b5ae" />)}
        {thin("M817 295C880 297 872 380 945 380")}
        {thin("M811 400.500H945")}
        {thin("M659 464C740 463 860 462 946 461")}
        {thin("M659 479C740 478 860 476 946 475")}
        {thin("M659 500C760 497 850 490 946 490")}
        {thin("M659 513C760 510 850 504 946 504")}
        {wire("M659 265L690 267")}
        {wire("M659 380L690 381")}
        {pair("M815 295C890 295 938 262 946 200")}
        {pair("M815 295C888 295 950 276 988 200")}
        {wire("M1063 350C1132 350 1092 454 1161 454")}
        {pair("M1060 400C1110 400 1110 482 1161 482")}
        {pair("M1060 533C1110 533 1110 468 1161 468")}
        {thin("M1054 598C1117 598 1098 497 1161 497")}
        {wire("M1043 654C1132 654 1072 526 1161 526")}
        {wire("M935 590H952")}
        <rect x="659.500" y="675.500" width="6" height="27" fill="url(#gGray)" stroke="#000" />
      </svg>

      <Component name="ASE" pos="left-[31px] top-[57px] w-[124px] h-[105px]" inW="w-[58px]" tone={purple}
        inputs={["_analysisGrid", "blindStates_", "_occSchedule_", "_threshold_", "_targetHrs_", "_targetArea_"]}
        outputs={["report", "success", "ASE", "perArea", "prblmPts", "prblmHrs", "legendPar"]} />
      <Component name="sDA" pos="left-[31px] top-[172px] w-[119px] h-[76px]" inW="w-[58px]" tone={purple}
        inputs={["_analysisGrid", "blindStates_", "_occSchedule_", "_threshold_", "_targetDA_"]}
        outputs={["report", "sDA", "DA", "prblmPts"]} />
      <Component name="Parameters" pos="left-[287px] top-[169px] w-[113px] h-[64px]" inW="w-[44px]" arrows={["ASE", "sDA", "Data[3]"]}
        inputs={["ASE", "sDA", "Data[3]"]} outputs={["Parameters"]} />
      <Component name="Iterator" pos="left-[289px] top-[252px] w-[110px] h-[107px]" inW="w-[44px]" footer="Fly"
        inputs={["Angle Ls", "Exterior Ls", "Interior Ls", "OKB", "Input[N]", "Selection"]}
        outputs={["Angle Ls", "Exterior Ls", "Interior Ls", "OKB", "Value[N]", "Genome"]} />
      <Component name="Img Setting" pos="left-[293px] top-[365px] w-[101px] h-[66px]" inW="w-[32px]"
        inputs={["SaveAs", "Views", "Width", "Height"]} outputs={["ImgSetting"]} />
      <Component name="Aggregator" pos="left-[503px] top-[245px] w-[116px] h-[91px]" inW="w-[57px]" arrows={["3DObjects"]}
        inputs={["Folder", "Genome", "Phenome", "ImgSetting", "3DObjects", "Write?"]} outputs={["Records"]} />

      <div className="absolute left-[286px] top-[142px] w-[117px] h-4 rounded-[3px] border border-black bg-[#fff95a] pl-[20px] text-[8px] leading-3 text-[#77772a] font-['Liberation_Mono',monospace]">
        <Port side="l" />C:\Colibri\Run<Port side="r" />
      </div>
      <div className="absolute left-[237px] top-[382px] w-[38px] h-4 rounded-[3px] border border-black bg-[#fff95a] pl-[7px] text-[8px] leading-3 text-[#77772a] font-['Liberation_Mono',monospace]">
        <Port side="l" />Top<Port side="r" />
      </div>
      <div className="absolute left-[307px] top-[446px] w-[77px] h-4 rounded-[3px] border border-[#222] bg-linear-to-b from-[#aaa8b8] to-[#8b8998] flex text-[8px] leading-[14px] text-[#222] font-['Roboto',sans-serif]">
        <span className="flex-1 text-center">Toggle</span>
        <button className="w-[35px] bg-[#333] border border-black text-white font-bold text-[9px] leading-3 font-['Liberation_Mono',monospace]">False</button>
        <Port side="r" />
      </div>

      <div className="absolute left-[414px] top-[450px] text-[#b0ada8] whitespace-nowrap">
        <p className="text-[19px] leading-6">Activate Windows</p>
        <p className="text-[14px] leading-5">Go to Settings to activate Windows.</p>
      </div>
      <svg viewBox="0 0 56 46" className="absolute left-[635px] top-[450px] w-[56px] h-[46px]" aria-hidden="true">
        <path d="M12 30C9 12 20 3 36 4" fill="none" stroke="#000" strokeWidth="4" />
        <path d="M2 18l6-4 5 5-6 4z" fill="#000" />
        <circle cx="32" cy="23" r="19" fill="url(#gKnob)" stroke="#222" strokeWidth="2" />
        <circle cx="32" cy="23" r="17.500" fill="none" stroke="#fff" strokeWidth="2" />
        <path d="M33 5l5 1-3 6zM14 17l7 3-6 3zM50 24l-6 4 5 3zM28 41l2-6 3 6z" fill="#fff" />
      </svg>
    </div>
  );
}

const cyl = (fill: string, stroke: string, inner: string) => (
  <g stroke={stroke} transform="rotate(-40 12 12)">
    <rect x="2" y="5" width="20" height="14" rx="4" fill={fill} />
    <ellipse cx="18.500" cy="12" rx="3.800" ry="7" fill={fill} />
    <ellipse cx="18.500" cy="12" rx="1.800" ry="3.600" fill={inner} />
  </g>
);

function Caret() {
  return <svg viewBox="0 0 6 3" className="w-[6px] h-[3px] shrink-0" aria-hidden="true"><path d="M0 0h6L3 3z" fill="#000" /></svg>;
}

function Grasshopper() {
  return (
    <section aria-label="Grasshopper" className={"absolute left-[656px] right-[8px] top-0 bottom-0 flex flex-col bg-[#f0f0f0] border-l border-t border-[#777] text-[12px] text-black shadow-[0_0_14px_rgba(0,0,0,0.5)] " + UI}>
      <header className="h-[30px] shrink-0 bg-white flex items-center pl-2">
        <h1 className="flex-1">Grasshopper - runcolibri1*</h1>
        <button aria-label="Minimize" className="w-[46px] flex justify-center"><svg viewBox="0 0 11 11" className="w-[11px] h-[11px]" stroke="#000"><path d="M0 5.500h11" /></svg></button>
        <button aria-label="Maximize" className="w-[46px] flex justify-center"><svg viewBox="0 0 11 11" className="w-[11px] h-[11px]" stroke="#000" fill="none"><path d="M.5.5h10v10H.5z" /></svg></button>
        <button aria-label="Close" className="w-[46px] flex justify-center"><svg viewBox="0 0 11 11" className="w-[11px] h-[11px]" stroke="#000"><path d="M.5.5l10 10M10.500.5l-10 10" /></svg></button>
      </header>
      <nav className="h-[27px] shrink-0 bg-[#f9f9f9] flex items-center gap-[17px] pl-[13px] pr-[9px]">
        {["File", "Edit", "View", "Display", "Solution", "Help"].map((m) => <button key={m}>{m}</button>)}
        <span className="ml-auto">runcolibri1</span>
      </nav>
      <div className="h-[23px] shrink-0 flex items-end pl-[9px] text-[#6d6d6d]">
        {tabs.map(([t, w], i) =>
          t === "TT Toolbox" ? (
            <button key={i} className="w-[74px] shrink-0 -ml-[5px] mr-[8px] h-[24px] bg-white border border-b-0 border-[#888] rounded-t-[6px] text-black whitespace-nowrap">{t}</button>
          ) : (
            <button key={i} className={"h-[23px] text-left whitespace-nowrap shrink-0 " + w}>{t}</button>
          )
        )}
      </div>
      <div className="h-[78px] shrink-0 ml-px mr-[2px] rounded-[6px] border-t border-l border-[#999] bg-linear-to-b from-[#d6d6d6] to-[#f0f0f0] flex gap-[3px] pt-px pl-px">
        {groups.map(([name, clusters]) => (
          <div key={name} className="h-[73px] rounded-[4px] border border-[#666] bg-linear-to-b from-[#e8e8e8] to-[#cccccc] flex flex-col overflow-hidden">
            <div className="flex-1 flex pl-[2px] pr-[3px] pt-px">
              {clusters.map((cols, ci) => (
                <div key={ci} className={"flex " + (ci ? "ml-1 pl-1 border-l border-[#bbb]" : "")}>
                  {cols.map(([a, da, b, db]) => (
                    <div key={a} className="w-7 flex flex-col items-center">
                      <button aria-label={a} className="h-7 flex items-center"><Ico>{da}</Ico></button>
                      {b && <button aria-label={b} className="h-7 flex items-center"><Ico>{db}</Ico></button>}
                    </div>
                  ))}
                </div>
              ))}
            </div>
            <div className="h-[13px] shrink-0 bg-[#1e1e1e] text-white text-[11px] leading-3 flex items-center font-['Liberation_Sans',sans-serif] pl-[4px] pr-[2px]">
              <span className="flex-1 text-center whitespace-nowrap">{name}</span>
              <svg viewBox="0 0 8 8" className="w-2 h-2" stroke="#999" strokeWidth="1.500" fill="none"><path d="M4 0v7M1 4l3 3 3-3" /></svg>
            </div>
          </div>
        ))}
      </div>
      <div className="shrink-0 h-[8px]" />
      <div className="mx-px shrink-0 border-t border-[#777] h-[33px] bg-linear-to-b from-white to-[#f2f2f2] flex items-center px-[3px] border-l">
        <button aria-label="Open" className="w-6"><Ico className="w-[22px] h-[22px]"><path d="M4 10V5l4-4h10v9" fill="#f6f6f6" stroke="#444" /><path d="M4 5h4V1" stroke="#444" /><path d="M1 12h10l2-3h10v14H1z" fill="url(#gGreen)" stroke="#246a10" /></Ico></button>
        <button aria-label="Save" className="w-6 ml-[5px]"><Ico><path d="M1 1h22v22H4l-3-3z" fill="#2b6be0" stroke="#0c1f60" strokeWidth="1.500" /><path d="M5 2h14v9H5z" fill="#e8e8e8" /><path d="M6 14h11v9H6z" fill="#888" /><path d="M8 16h4v6H8z" fill="#123a9c" /></Ico></button>
        <span className="w-px h-5 bg-[#aaa] ml-[6px] mr-[5px]" />
        <span className="relative w-[136px] h-[23px]">
          <select aria-label="Zoom" className="appearance-none w-full h-full border border-[#777] bg-white pl-[2px] block"><option>72%</option></select>
          <svg viewBox="0 0 8 5" className="absolute right-1 top-[9px] w-2 h-[5px] pointer-events-none" fill="none" stroke="#333"><path d="M.5.5L4 4 7.500.5" /></svg>
        </span>
        <button aria-label="Zoom extents" className="ml-[5px] flex items-center gap-[6px]"><Ico><path d="M2.500 9V2.500H9M15 2.500h6.500V9M21.500 15v6.500H15M9 21.500H2.500V15" stroke="#1c1c1c" strokeWidth="4" /><path d="M9 9l6 6M15 9l-6 6" stroke="#111" strokeWidth="2" /></Ico><Caret /></button>
        <button aria-label="Preview" className="ml-[6px] flex items-center gap-[7px]"><Ico><path d="M1 13c5-9 17-9 22 0-6 7-16 7-22 0z" fill="#fff" stroke="#111" strokeWidth="1.500" /><circle cx="12" cy="12.500" r="5" fill="#4fa3d8" stroke="#1c4a78" /><circle cx="12" cy="12.500" r="2" fill="#111" /><path d="M2 10C7 4 17 4 22 10" stroke="#333" /></Ico><Caret /></button>
        <button aria-label="Sketch" className="ml-[4px]"><Ico><path d="M1 20c6 6 8-2 5-5s-1-5 2-4" stroke="#6b1c10" strokeWidth="1.800" /><path d="M10 18l1-7L20 2l2 5-7 11z" fill="url(#gRed)" stroke="#7b1000" /><path d="M8 20l3-8 4 5z" fill="#f2d8a8" /></Ico></button>
        <div className="ml-auto flex items-center">
          <button aria-label="No preview" className="w-[29px] flex justify-center"><Ico className="w-[22px] h-[22px]"><path d="M6 11l4-8c3-3 9-1 9 3l-3 9H7z" fill="url(#gGray)" stroke="#888" /><ellipse cx="15" cy="5" rx="3" ry="2" fill="#eee" stroke="#999" /><path d="M2 15c5-4 14-4 20 0-5 10-15 10-20 0z" fill="#333" /></Ico></button>
          <button aria-label="Wireframe" className="w-[29px] flex justify-center"><Ico className="w-[22px] h-[22px]">{cyl("#fafafa", "#222", "#fff")}<ellipse cx="7" cy="16" rx="2.500" ry="4.500" transform="rotate(-40 7 16)" stroke="#222" /></Ico></button>
          <button aria-label="Shaded" className="w-7 h-7 flex justify-center items-center border border-[#0078d7] bg-[#f7f7f7]"><Ico className="w-[22px] h-[22px]">{cyl("url(#gRed)", "#5a0000", "#500")}</Ico></button>
          <span className="w-px h-5 bg-[#aaa] mx-[9px]" />
          <button aria-label="Selected only" className="w-[28px]"><Ico className="w-[22px] h-[22px]">{cyl("url(#gGreen)", "#245a10", "#184808")}<path d="M3 12l6-5 8 11-4 3c-6 1-12-4-10-9z" fill="#ddd" stroke="#777" /><path d="M3 3l17 19" strokeWidth="1.500" /></Ico></button>
          <button aria-label="Document preview" className="w-[24px]"><Ico className="w-[22px] h-[22px]"><circle cx="12" cy="12" r="10.500" fill="#eee" stroke="#333" /><path d="M12 1.500a10.500 10.500 0 000 21z" fill="#e88a20" /></Ico></button>
          <span className="w-px h-5 bg-[#aaa] ml-1 mr-[6px]" />
          <button aria-label="Mesh quality" className="flex items-center gap-[6px]"><Ico className="w-5 h-5"><path d="M8 2l10 1 5 8-4 9-10 2-7-6-1-8z" fill="#6fb0f4" stroke="#123a6c" strokeWidth="1.500" /><path d="M8 3l9 1 3 5-9 1-7-1z" fill="#c4e0ff" stroke="none" /></Ico><Caret /></button>
        </div>
      </div>
      <div className="flex-1 min-h-0 flex flex-col ml-[2px]"><Canvas /></div>
      <footer className="h-[25px] shrink-0 border-t-2 border-white flex items-center pl-[3px] pr-[3px] gap-[2px]">
        <Ico className="w-[18px] h-[18px]"><circle cx="12" cy="12" r="11" fill="#1450a8" stroke="#0c1f60" /><circle cx="12" cy="12" r="8" fill="#58c8f0" stroke="none" /><path d="M9.500 4h5l-1 10h-3z" fill="#fff" stroke="#113" /><circle cx="12" cy="18" r="2" fill="#fff" stroke="#113" /></Ico>
        <span className="flex-1">Autosave complete (27 seconds ago)</span>
        <span className="text-[#7a6e62]">1.0.0007</span>
        <svg viewBox="0 0 12 12" className="w-3 h-3 ml-[14px] self-end mb-[2px]" fill="#a0a0a0" aria-hidden="true"><path d="M9 1h2v2H9zM5 5h2v2H5zM9 5h2v2H9zM1 9h2v2H1zM5 9h2v2H5zM9 9h2v2H9z" /></svg>
      </footer>
    </section>
  );
}

const apps: [string, string, ReactNode][] = [
  ["Edge", "", <path d="M2 11C3 3 9 1 13 1c6 0 10 5 9 12H8c0 5 7 7 12 4v4.500C13 25 4 23 4 15c0-4 3-7 6-8-2 2-2 3-2 3h8c0-6-9-6-14 1z" fill="#1481d8" stroke="none" />],
  ["File Explorer", "run", <g stroke="none"><path d="M1 3h8l2 2h12v16H1z" fill="#e9a820" /><path d="M1 6h22v15H1z" fill="#fbd775" /><path d="M5 13h14v9h-4v-4H9v4H5z" fill="#3f9be0" /></g>],
  ["Mail", "", <g stroke="none"><path d="M0 9l12-8 12 8v14H0z" fill="#0f66b8" /><path d="M2 8h20l-10 8z" fill="#f3f3f3" /><path d="M0 9l12 8L24 9v14H0z" fill="#1f9bea" /><path d="M0 23l12-8 12 8z" fill="#4fc3f7" /></g>],
  ["TeamViewer", "", <g stroke="none"><rect width="24" height="24" fill="#0e75d8" /><circle cx="12" cy="12" r="10" fill="#fff" /><path d="M3 12l5-4v3h8V8l5 4-5 4v-3H8v3z" fill="#0e75d8" /></g>],
  ["AutoCAD", "", <g stroke="none"><rect width="24" height="24" fill="#d9404a" /><path d="M0 0h24v10L0 18z" fill="#f3b8b4" /><path d="M10 4h5l5 15h-4l-2-4h-4l-3 4H4z" fill="#a00c14" /></g>],
  ["Chrome", "run", <g stroke="none"><circle cx="12" cy="12" r="11" fill="#f6c320" /><path d="M2.500 6.500A11 11 0 0122 7H12a5 5 0 00-5 4z" fill="#e04434" /><path d="M2.500 6.500L8 15c2 2 4 2 6 1.500L10.500 23A11 11 0 012.500 6.500z" fill="#2fa14c" /><circle cx="12" cy="12" r="5.300" fill="#fff" /><circle cx="12" cy="12" r="4.200" fill="#3f7ee8" /></g>],
  ["Store", "", <><path d="M8 6V3c0-3 8-3 8 0v3" stroke="#fff" strokeWidth="1.500" /><path d="M1 6h22v15l-2 2H3l-2-2z" fill="#fff" stroke="none" /><g stroke="none"><path d="M7 9h5v5H7z" fill="#f04e1f" /><path d="M13 9h5v5h-5z" fill="#7eb900" /><path d="M7 15h5v5H7z" fill="#1f9fe8" /><path d="M13 15h5v5h-5z" fill="#fdb813" /></g></>],
  ["Rhinoceros", "active", <RhinoMark />],
  ["Word", "run", <g stroke="none"><path d="M12 3h11v18H12z" fill="#fff" /><path d="M14 6h7M14 9h7M14 12h7M14 15h7M14 18h7" stroke="#2b579a" strokeWidth="1.300" /><path d="M1 4l13-3v22L1 20z" fill="#2b579a" /><path d="M3.500 8l1.800 8 2-7 2 7 2-8" stroke="#fff" strokeWidth="1.500" fill="none" /></g>],
  ["Player", "run", <g stroke="none"><rect x="2" y="2" width="20" height="20" rx="4" fill="#0c5cff" stroke="#59a0ff" /><path d="M9 7l8 5-8 5z" fill="#ffe81c" /></g>],
];

function Taskbar() {
  return (
    <footer className={"h-10 shrink-0 flex bg-[#3b3b3b] text-white " + UI}>
      <button aria-label="Start" className="w-12 flex items-center justify-center">
        <svg viewBox="0 0 16 16" className="w-4 h-4" fill="#fff"><path d="M0 2.200l7-1V7.500H0zM8 1l8-1v7.500H8zM0 8.500h7v6.300l-7-1zM8 8.500h8V16l-8-1z" /></svg>
      </button>
      <label className="w-[344px] shrink-0 bg-[#f1f1f1] border border-[#c4c4c4] flex items-center pl-[11px] gap-[11px]">
        <svg viewBox="0 0 17 17" className="w-[17px] h-[17px] shrink-0" fill="none" stroke="#222" strokeWidth="1.400"><circle cx="11" cy="6" r="5" /><path d="M7.500 9.500L1 16" /></svg>
        <input type="search" aria-label="Search" placeholder="Type here to search" className="flex-1 min-w-0 text-[14px] outline-none placeholder:text-[#444]" />
      </label>
      <div className="flex ml-[2px] gap-px">
        {apps.map(([n, s, d]) => (
          <button key={n} aria-label={n} className={"relative w-12 h-10 flex items-center justify-center " + (s === "active" ? "bg-[#616161]" : "")}>
            <Ico>{d}</Ico>
            {s && <span className={"absolute bottom-0 h-[2px] bg-[#76b9ed] " + (s === "active" ? "inset-x-0" : "inset-x-1")} />}
          </button>
        ))}
      </div>
      <div className="ml-auto flex items-center text-[12px] leading-[18px]">
        <button aria-label="Hidden icons"><svg viewBox="0 0 12 7" className="w-3 h-[7px]" fill="none" stroke="#fff" strokeWidth="1.300"><path d="M.7 6.300L6 1l5.300 5.300" /></svg></button>
        <svg viewBox="0 0 17 12" className="w-[17px] h-3 ml-[10px]" fill="none" stroke="#e6e6e6" aria-hidden="true"><path d="M5 2.500h9.500v8H5M15.500 5v3M1.500 0v3M4.500 0v3M.5 3h5v2c0 2-5 2-5 0zM3 6v5M7 4.500l4 4M11 4.500l-4 4" /></svg>
        <button className="ml-[9px]">ENG</button>
        <button className="ml-[8px] text-right">
          <span className="block" dir="ltr">05:00 ق.ظ</span>
          <span className="block" dir="ltr">۱۳۹۹/۰۳/۰۲</span>
        </button>
        <button aria-label="Notifications" className="relative ml-[17px] mr-[11px] w-[26px] h-6">
          <svg viewBox="0 0 17 17" className="w-[17px] h-[17px]" fill="#fff"><path d="M0 1h16v11h-5v4l-4-4H0z" /><path d="M3 4h10M3 6.500h10M3 9h7" stroke="#3b3b3b" /></svg>
          <span className="absolute right-0 bottom-0 w-4 h-4 rounded-full bg-[#3b3b3b] border border-[#999] text-[12px] leading-[14px]">۱</span>
        </button>
        <span className="w-px h-10 bg-[#777] mr-1" />
      </div>
    </footer>
  );
}

export default function App() {
  return (
    <main className="h-screen flex flex-col overflow-hidden bg-[#3b3b3b]">
      <Defs />
      <div className="relative flex-1 min-h-0 overflow-hidden">
        <Rhino />
        <Grasshopper />
      </div>
      <Taskbar />
    </main>
  );
}
